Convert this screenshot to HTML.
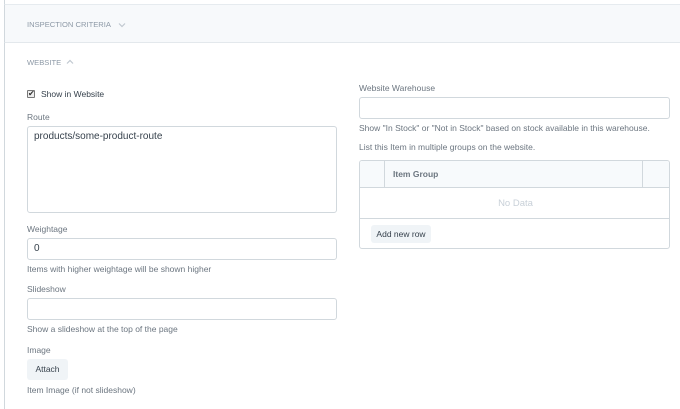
<!DOCTYPE html>
<html><head><style>
*{box-sizing:border-box;margin:0;padding:0}
body{width:680px;height:409px;background:#fff;font-family:"Liberation Sans",sans-serif;font-size:9px;color:#6c7680;position:relative;overflow:hidden}
.a{position:absolute}
.top{left:4px;top:0;width:676px;height:5px;background:#fff;border-bottom:1px solid #e6ebef;border-left:1px solid #d1d8dd}
.band{left:4px;top:5px;width:676px;height:38px;background:#f7f9fb;border-bottom:1px solid #e3e8ec;border-left:1px solid #d1d8dd}
.vl{left:4px;top:43px;width:1px;height:366px;background:#d1d8dd}
.inp{border:1px solid #d1d8dd;border-radius:3px;background:#fff}
.lbl{color:#6c7680;font-size:8.5px}
.txt{color:#36414c;font-size:10px}
.hd{font-size:7.6px;color:#8d99a6}
</style></head><body>
<div class="a top"></div>
<div class="a band"></div>
<div class="a vl"></div>
<div class="a hd" style="left:27px;top:20px">INSPECTION CRITERIA</div>
<svg class="a" style="left:118px;top:22px" width="8" height="6"><path d="M1 1.5 L4 4.5 L7 1.5" stroke="#c0c8d0" stroke-width="1.2" fill="none"/></svg>
<div class="a hd" style="left:27px;top:58px">WEBSITE</div>
<svg class="a" style="left:66px;top:59px" width="8" height="6"><path d="M1 4.5 L4 1.5 L7 4.5" stroke="#c0c8d0" stroke-width="1.2" fill="none"/></svg>
<div class="a" style="left:27px;top:90px;width:8px;height:8px;border:1px solid #777;border-radius:1px;background:#eee;font-size:8px;line-height:6px;color:#333;text-align:center">✔</div>
<div class="a" style="left:41px;top:89px;color:#36414c;font-size:8.5px">Show in Website</div>
<div class="a lbl" style="left:27px;top:112px">Route</div>
<div class="a inp" style="left:27px;top:126px;width:310px;height:87px"></div>
<div class="a txt" style="left:34px;top:131px">products/some-product-route</div>
<div class="a lbl" style="left:27px;top:224px">Weightage</div>
<div class="a inp" style="left:27px;top:238px;width:310px;height:22px"></div>
<div class="a txt" style="left:34px;top:243px">0</div>
<div class="a lbl" style="left:27px;top:264px">Items with higher weightage will be shown higher</div>
<div class="a lbl" style="left:27px;top:284px">Slideshow</div>
<div class="a inp" style="left:27px;top:298px;width:310px;height:22px"></div>
<div class="a lbl" style="left:27px;top:324px">Show a slideshow at the top of the page</div>
<div class="a lbl" style="left:27px;top:345px">Image</div>
<div class="a" style="left:27px;top:359px;width:41px;height:21px;background:#f0f4f7;border-radius:3px;color:#36414c;font-size:8.5px;text-align:center;line-height:21px">Attach</div>
<div class="a lbl" style="left:27px;top:385px">Item Image (if not slideshow)</div>
<div class="a lbl" style="left:359px;top:83px">Website Warehouse</div>
<div class="a inp" style="left:359px;top:97px;width:311px;height:22px"></div>
<div class="a lbl" style="left:359px;top:123px">Show "In Stock" or "Not in Stock" based on stock available in this warehouse.</div>
<div class="a lbl" style="left:359px;top:142px">List this Item in multiple groups on the website.</div>
<div class="a" style="left:359px;top:160px;width:311px;height:89px;border:1px solid #d1d8dd;border-radius:3px;overflow:hidden">
 <div class="a" style="left:0;top:0;width:311px;height:27px;background:#f7fafc;border-bottom:1px solid #d1d8dd"></div>
 <div class="a" style="left:24px;top:0;width:1px;height:27px;background:#d1d8dd"></div>
 <div class="a" style="left:282px;top:0;width:1px;height:27px;background:#d1d8dd"></div>
 <div class="a" style="left:33px;top:8px;font-weight:bold;color:#6c7680;font-size:8.5px">Item Group</div>
 <div class="a" style="left:0;top:37px;width:311px;text-align:center;color:#c8d0d8;font-size:9.5px">No Data</div>
 <div class="a" style="left:0;top:57px;width:311px;height:1px;background:#d1d8dd"></div>
 <div class="a" style="left:11px;top:64px;width:60px;height:18px;background:#f0f4f7;border-radius:3px;color:#36414c;font-size:8.5px;text-align:center;line-height:18px">Add new row</div>
</div>
</body></html>
